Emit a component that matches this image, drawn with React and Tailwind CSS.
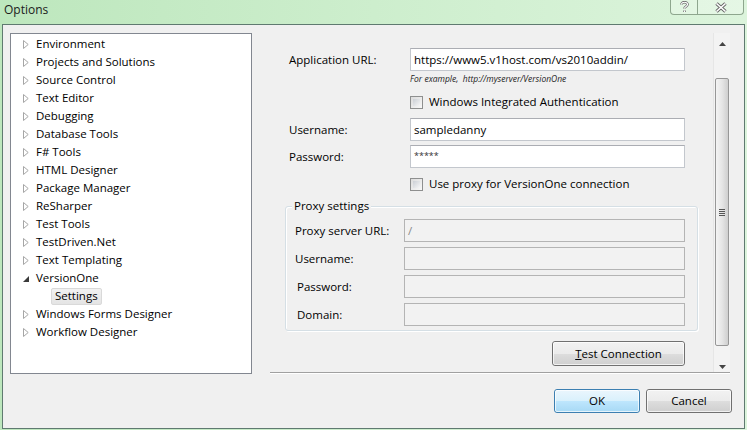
import React from "react";

const treeItems = [
    "Environment",
    "Projects and Solutions",
    "Source Control",
    "Text Editor",
    "Debugging",
    "Database Tools",
    "F# Tools",
    "HTML Designer",
    "Package Manager",
    "ReSharper",
    "Test Tools",
    "TestDriven.Net",
    "Text Templating",
];

const Collapsed = () => (
    <svg width="6" height="9" viewBox="0 0 6 9">
        <polygon points="0.5,0.5 5.2,4.5 0.5,8.5" fill="#fff" stroke="#a6a6a6" strokeWidth="1" />
    </svg>
);

const Expanded = () => (
    <svg width="6" height="9" viewBox="0 0 6 9">
        <polygon points="6,2 6,8 0,8" fill="#3a3a3a" />
    </svg>
);

const TreeRow = ({ label, open }) => (
    <div className="flex items-center h-[18px] pl-[12px]">
        <span className="w-[6px] flex items-center">{open ? <Expanded /> : <Collapsed />}</span>
        <span className="ml-[7px] whitespace-nowrap">{label}</span>
    </div>
);

const Checkbox = ({ label, className = "" }) => (
    <div className={`flex items-center h-[18px] ml-[125px] ${className}`}>
        <span className="w-[13px] h-[13px] border border-[#8e8f8f] bg-gradient-to-br from-[#dcdcdc] to-[#f8f8f8] p-[2px]">
            <span className="block w-full h-full bg-gradient-to-br from-[#cbcfd5] to-[#f6f6f6]" />
        </span>
        <span className="ml-[6px] whitespace-nowrap">{label}</span>
    </div>
);

const FieldRow = ({ label, value, className = "", valueClass = "" }) => (
    <div className={`flex items-center h-[23px] ml-[4px] ${className}`}>
        <span className="w-[121px] whitespace-nowrap">{label}</span>
        <div className={`w-[275px] h-[23px] bg-white border border-[#c3c7cd] border-t-[#abadb3] flex items-center px-[3px] whitespace-nowrap overflow-hidden ${valueClass}`}>
            {value}
        </div>
    </div>
);

const ProxyRow = ({ label, value, indent, className = "" }) => (
    <div className={`flex items-center h-[23px] ${className}`}>
        <span className={`whitespace-nowrap ${indent ? "w-[107px] ml-[11px]" : "w-[109px] ml-[9px]"}`}>{label}</span>
        <div className="w-[281px] h-[23px] bg-[#f2f2f2] border border-[#b4b4b4] flex items-center px-[3px] text-[#8a8a8a]">
            {value}
        </div>
    </div>
);

const Button = ({ children, primary, className = "" }) => (
    <button
        className={`flex items-center justify-center rounded-[3px] border ${
            primary
                ? "border-[#3c7fb1] bg-[linear-gradient(#eaf6fd_0%,#d9f0fc_50%,#bee6fd_51%,#a7d9f5_100%)]"
                : "border-[#707070] bg-[linear-gradient(#f2f2f2_0%,#ebebeb_50%,#dddddd_51%,#cfcfcf_100%)]"
        } ${className}`}
    >
        <span className="rounded-[2px] w-full h-full flex items-center justify-center border border-white/70">{children}</span>
    </button>
);

export default function App() {
    return (
        <div className="w-[747px] h-[430px] flex flex-col overflow-hidden bg-gradient-to-r from-[#bde7bd] via-[#cdeecd] to-[#dcf4dc] font-['Open_Sans',sans-serif] text-[11.5px] text-black">
            {/* Title bar */}
            <div className="relative h-[24px] shrink-0">
                <span className="absolute left-[4px] top-[1px] text-[12px] leading-[18px] text-[#1b1b1b]">Options</span>
                <div className="absolute right-[3px] top-0 flex h-[15px]">
                    <div className="w-[28px] h-full border border-t-0 border-[#8ea68e] rounded-bl-[4px] bg-white/25 flex items-center justify-center">
                        <svg width="9" height="12" viewBox="0 0 9 12">
                            <path d="M1.5 3.5 C1.5 0.5 7.5 0.5 7.5 3.5 C7.5 5.5 4.5 5.5 4.5 7.5 M4.5 9.5 L4.5 11" fill="none" stroke="#666" strokeWidth="2.6" />
                            <path d="M1.5 3.5 C1.5 0.5 7.5 0.5 7.5 3.5 C7.5 5.5 4.5 5.5 4.5 7.5 M4.5 9.5 L4.5 11" fill="none" stroke="#fff" strokeWidth="1.2" />
                        </svg>
                    </div>
                    <div className="w-[46px] h-full border border-t-0 border-l-0 border-[#8ea68e] rounded-br-[4px] bg-white/25 flex items-center justify-center">
                        <svg width="12" height="11" viewBox="0 0 12 11">
                            <path d="M1.5 1.5 L10.5 9.5 M10.5 1.5 L1.5 9.5" fill="none" stroke="#666" strokeWidth="3.4" />
                            <path d="M1.5 1.5 L10.5 9.5 M10.5 1.5 L1.5 9.5" fill="none" stroke="#fff" strokeWidth="1.6" />
                        </svg>
                    </div>
                </div>
            </div>

            {/* Client area */}
            <div className="flex-1 mx-[2px] mb-[1px] border border-[#5f7a70] bg-[#f0f0f0] flex flex-col">
                <div className="flex pt-[8px] pl-[7px]">
                    {/* Tree */}
                    <div className="w-[242px] h-[341px] border border-[#828790] bg-white pt-[1px]">
                        {treeItems.map((t) => (
                            <TreeRow key={t} label={t} />
                        ))}
                        <TreeRow label="VersionOne" open />
                        <div className="flex items-center h-[18px] pl-[40px]">
                            <span className="h-[17px] flex items-center px-[3px] border border-[#d9d9d9] rounded-[2px] bg-gradient-to-b from-[#f2f2f2] to-[#e4e4e4]">
                                Settings
                            </span>
                        </div>
                        <TreeRow label="Windows Forms Designer" />
                        <TreeRow label="Workflow Designer" />
                    </div>

                    {/* Right panel */}
                    <div className="ml-[18px] w-[460px] h-[340px] flex border-b border-[#a0a0a0] shadow-[0_1px_0_#ffffff]">
                        <div className="flex-1 pl-[15px] pt-[15px]">
                            <FieldRow label="Application URL:" value="https://www5.v1host.com/vs2010addin/" />
                            <div className="ml-[125px] mt-[1px] h-[14px] leading-[14px] text-[8.5px] italic text-[#222] whitespace-nowrap">
                                For example,&nbsp; http://myserver/VersionOne
                            </div>
                            <Checkbox className="mt-[7px]" label="Windows Integrated Authentication" />
                            <FieldRow className="mt-[7px]" label="Username:" value="sampledanny" />
                            <FieldRow className="mt-[4px]" label="Password:" value="*****" valueClass="text-[9px] text-[#333] items-start pt-[3px]" />
                            <Checkbox className="mt-[7px]" label="Use proxy for VersionOne connection" />

                            {/* Proxy group */}
                            <div className="relative mt-[13px] w-[413px] h-[125px] border border-[#d5dfe5] rounded-[3px] shadow-[inset_1px_1px_0_#ffffff,1px_1px_0_#ffffff] pt-[12px]">
                                <span className="absolute -top-[10px] left-[6px] px-[2px] bg-[#f0f0f0] leading-[18px]">Proxy settings</span>
                                <ProxyRow label="Proxy server URL:" value="/" />
                                <ProxyRow className="mt-[5px]" label="Username:" />
                                <ProxyRow className="mt-[5px]" label="Password:" indent />
                                <ProxyRow className="mt-[5px]" label="Domain:" indent />
                            </div>

                            <div className="w-[413px] flex justify-end pr-[13px] mt-[10px]">
                                <Button className="w-[133px] h-[25px]">
                                    <span className="underline">T</span>est Connection
                                </Button>
                            </div>
                        </div>

                        {/* Scrollbar */}
                        <div className="w-[17px] flex flex-col bg-[#f3f3f3] border-l border-[#e6e6e6]">
                            <div className="h-[19px] pt-[2px] flex items-center justify-center">
                                <svg width="7" height="4" viewBox="0 0 7 4">
                                    <polygon points="3.5,0 7,4 0,4" fill="#444" />
                                </svg>
                            </div>
                            <div className="mt-[26px] mx-[1px] h-[268px] rounded-[2px] border border-[#979797] bg-gradient-to-r from-[#f4f4f4] via-[#e6e6e6] to-[#cfcfcf] flex flex-col items-center justify-center gap-[1px]">
                                <span className="block w-[6px] h-[1px] bg-[#555]" />
                                <span className="block w-[6px] h-[1px] bg-[#555]" />
                                <span className="block w-[6px] h-[1px] bg-[#555]" />
                                <span className="block w-[6px] h-[1px] bg-[#555]" />
                            </div>
                            <div className="flex-1 flex items-end justify-center pb-[3px]">
                                <svg width="7" height="4" viewBox="0 0 7 4">
                                    <polygon points="0,0 7,0 3.5,4" fill="#444" />
                                </svg>
                            </div>
                        </div>
                    </div>
                </div>

                {/* Dialog buttons */}
                <div className="flex justify-end gap-[6px] pr-[12px] mt-[15px]">
                    <Button primary className="w-[86px] h-[24px]">OK</Button>
                    <Button className="w-[86px] h-[24px]">Cancel</Button>
                </div>
            </div>
        </div>
    );
}
